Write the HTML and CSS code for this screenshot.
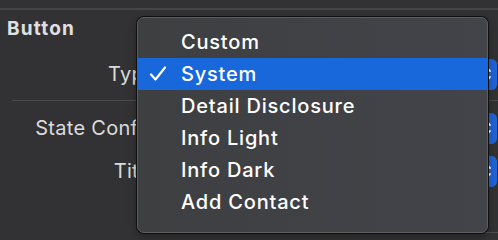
FILE: index.html
```html
<!DOCTYPE html>
<html>
<head>
<meta charset="utf-8">
<link rel="stylesheet" href="styles.css">
</head>
<body>
<div class="panel">
  <div class="rule"></div>
  <div class="section-title">Button</div>
  <div class="row row-type">
    <div class="label">Type</div>
    <div class="popup"><span class="popup-cap"><svg width="16" height="24" viewBox="0 0 16 24"><path d="M4 9 L8 5 L12 9 M4 15 L8 19 L12 15" fill="none" stroke="#fff" stroke-width="1.8" stroke-linecap="round" stroke-linejoin="round"/></svg></span></div>
  </div>
  <div class="sep"></div>
  <div class="row row-state">
    <div class="label">State Config</div>
    <div class="popup"><span class="popup-cap"><svg width="16" height="24" viewBox="0 0 16 24"><path d="M4 9 L8 5 L12 9 M4 15 L8 19 L12 15" fill="none" stroke="#fff" stroke-width="1.8" stroke-linecap="round" stroke-linejoin="round"/></svg></span></div>
  </div>
  <div class="row row-title">
    <div class="label">Title</div>
    <div class="popup"><span class="popup-cap"><svg width="16" height="24" viewBox="0 0 16 24"><path d="M4 9 L8 5 L12 9 M4 15 L8 19 L12 15" fill="none" stroke="#fff" stroke-width="1.8" stroke-linecap="round" stroke-linejoin="round"/></svg></span></div>
  </div>
  <div class="bottom-field"></div>
</div>

<div class="menu">
  <div class="item"><span class="check"></span><span class="text">Custom</span></div>
  <div class="item selected"><span class="check"><svg width="18" height="16" viewBox="0 0 18 16"><path d="M2 8.5 L6.5 13.5 L16 1.5" fill="none" stroke="#fff" stroke-width="2.2" stroke-linecap="round" stroke-linejoin="round"/></svg></span><span class="text">System</span></div>
  <div class="item"><span class="check"></span><span class="text">Detail Disclosure</span></div>
  <div class="item"><span class="check"></span><span class="text">Info Light</span></div>
  <div class="item"><span class="check"></span><span class="text">Info Dark</span></div>
  <div class="item"><span class="check"></span><span class="text">Add Contact</span></div>
</div>
</body>
</html>
```
FILE: styles.css
```css
html, body {
  margin: 0;
  padding: 0;
}
body {
  width: 498px;
  height: 240px;
  overflow: hidden;
  background: #323234;
  font-family: Inter, "Noto Sans", "Liberation Sans", sans-serif;
  color: #dcdcdc;
  position: relative;
}
.panel {
  padding-top: 8px;
  display: flex;
  flex-direction: column;
}
.rule {
  height: 2px;
  background: #464649;
}
.section-title {
  font-weight: 700;
  font-size: 19px;
  letter-spacing: 1.2px;
  line-height: 24px;
  padding: 7px 0 0 7px;
  height: 41px;
  color: #e0e0e0;
}
.row {
  display: flex;
  align-items: center;
  height: 32px;
}
.label {
  width: 156px;
  flex: none;
  text-align: right;
  font-size: 20px;
  font-weight: 400;
  letter-spacing: 0.3px;
  white-space: nowrap;
}
.popup {
  margin-left: 9px;
  width: 332px;
  height: 31px;
  border-radius: 6px;
  background: #5a5a5e;
  display: flex;
  justify-content: flex-end;
  overflow: hidden;
}
.popup-cap {
  width: 22px;
  background: #1f63d6;
  display: flex;
  align-items: center;
  justify-content: center;
}
.sep {
  height: 1px;
  background: #4a4a4d;
  margin: 10px 0 11px 12px;
}
.row-title {
  margin-top: 11px;
}
.bottom-field {
  margin: 45px 0 0 165px;
  height: 1px;
  background: #4f4f52;
}
.menu {
  position: absolute;
  left: 137px;
  top: 17px;
  width: 349px;
  height: 206px;
  border: 1px solid #5c5d60;
  border-radius: 7px;
  box-shadow: 0 0 0 1px #101012, 0 3px 8px rgba(0,0,0,0.35);
  background: linear-gradient(90deg, #3e3f41 0%, #42444a 100%);
  padding-top: 8px;
  box-sizing: content-box;
  overflow: hidden;
}
.item {
  display: flex;
  align-items: center;
  height: 32px;
  color: #ffffff;
  font-size: 20px;
  font-weight: 500;
  letter-spacing: 0.8px;
}
.item.selected {
  background: #1868dc;
}
.check {
  width: 43px;
  flex: none;
  display: flex;
  justify-content: flex-start;
  padding-left: 11px;
  box-sizing: border-box;
}
.text {
  white-space: nowrap;
}
```
